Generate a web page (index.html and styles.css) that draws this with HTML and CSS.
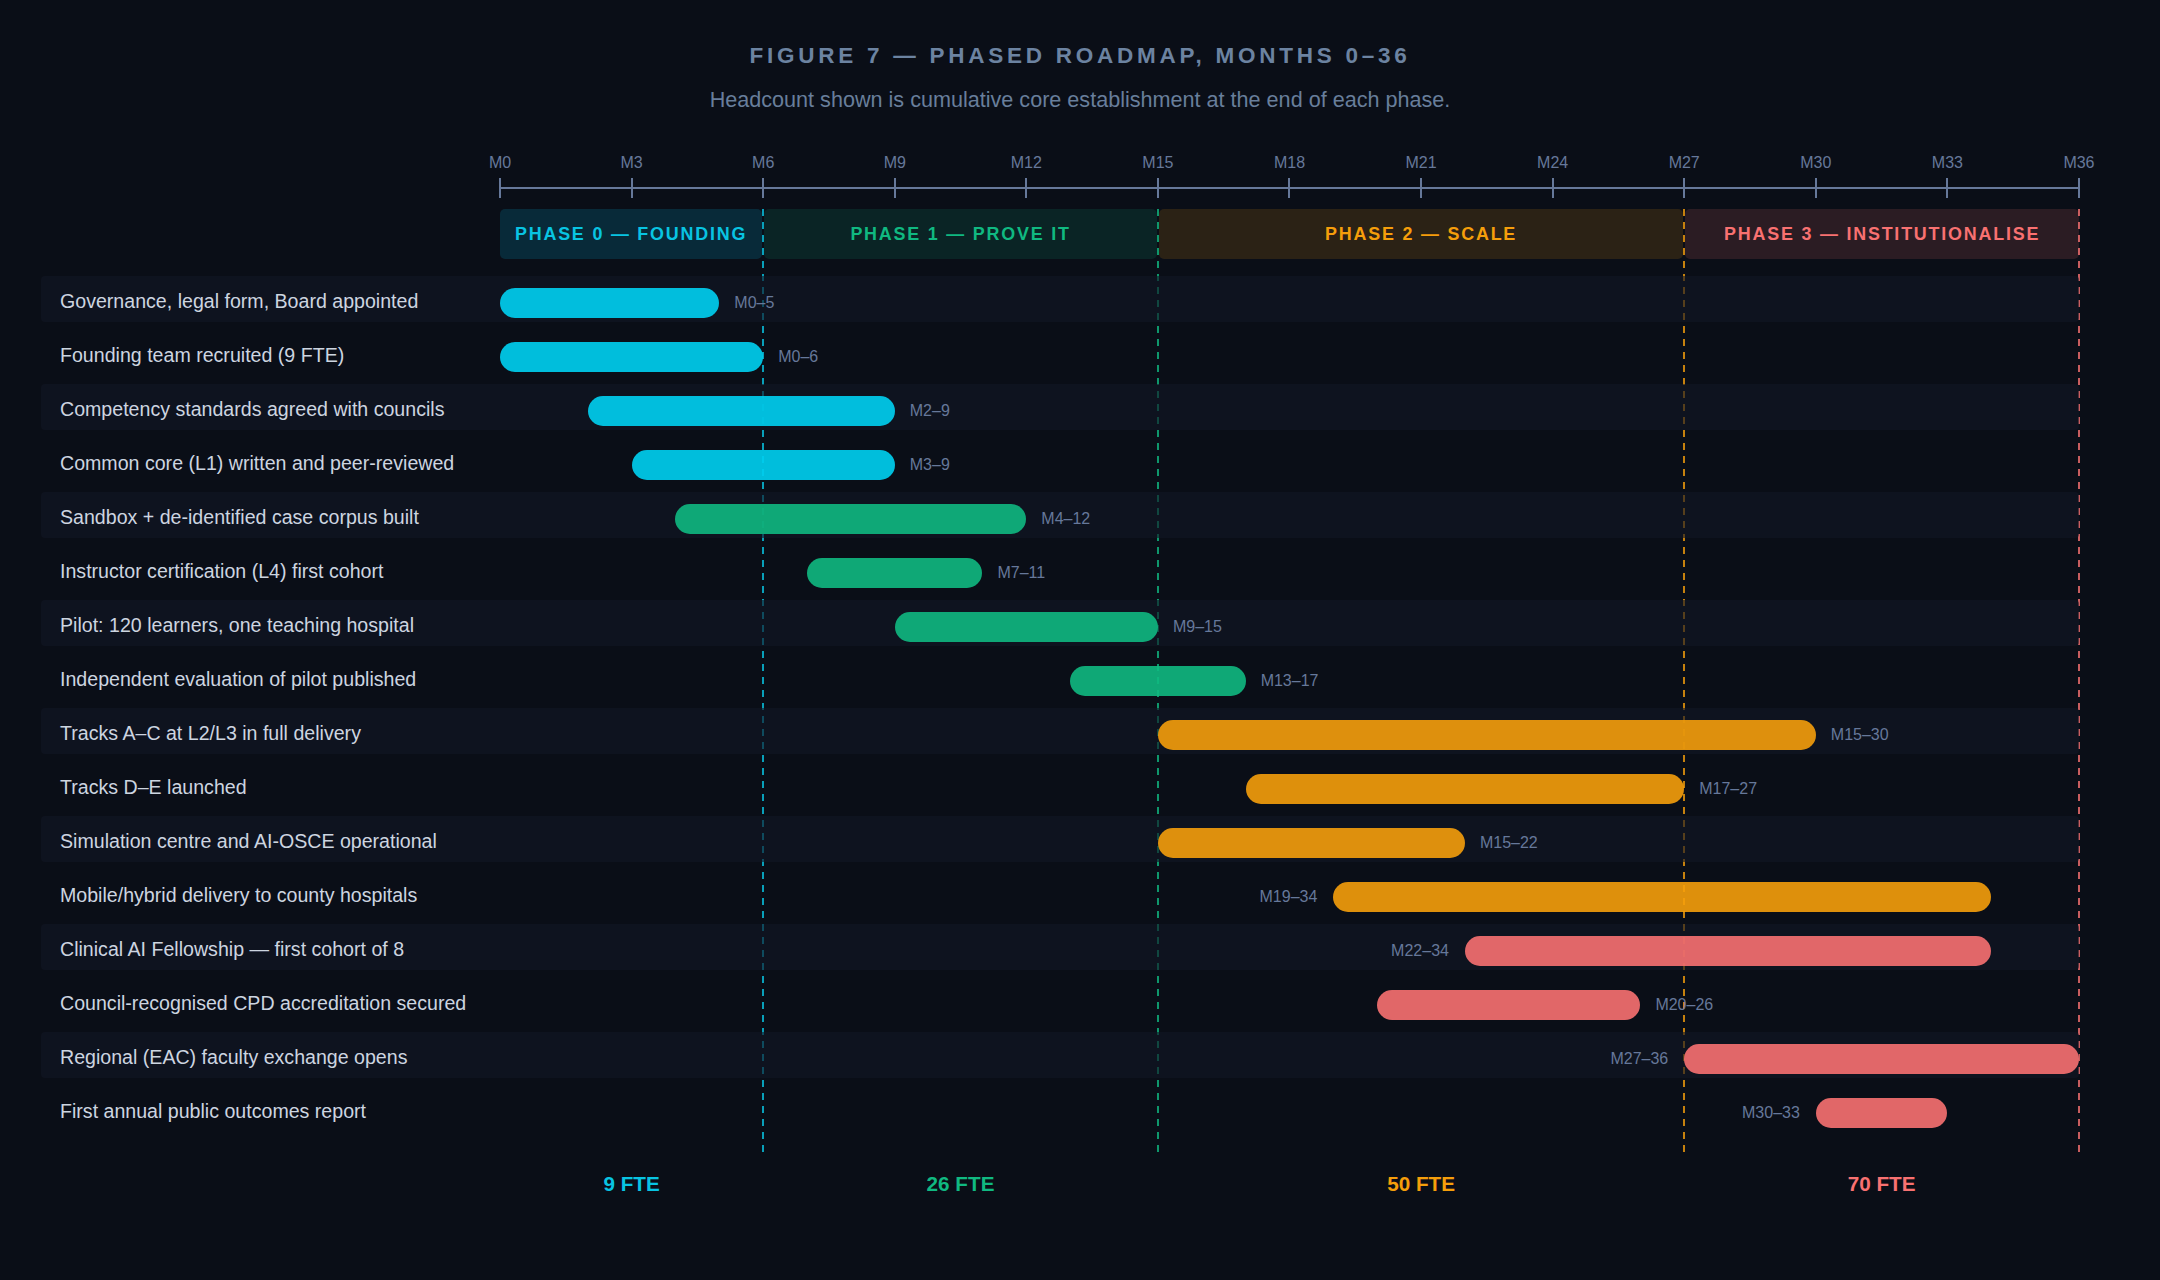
FILE: index.html
```html
<!DOCTYPE html>
<html lang="en">
<head>
<meta charset="utf-8">
<title>Figure 7 — Phased roadmap</title>
<link rel="stylesheet" href="styles.css">
</head>
<body>
<header class="head">
  <h1 class="title">FIGURE 7 — PHASED ROADMAP, MONTHS 0–36</h1>
  <p class="subtitle">Headcount shown is cumulative core establishment at the end of each phase.</p>
</header>

<section class="chart">
  <div class="track">
    <div></div>
    <div class="axis-labels">
      <span class="tick-label">M0</span><span class="tick-label">M3</span><span class="tick-label">M6</span><span class="tick-label">M9</span><span class="tick-label">M12</span><span class="tick-label">M15</span><span class="tick-label">M18</span><span class="tick-label">M21</span><span class="tick-label">M24</span><span class="tick-label">M27</span><span class="tick-label">M30</span><span class="tick-label">M33</span><span class="tick-label">M36</span>
    </div>
  </div>
  <div class="track">
    <div></div>
    <div class="axis-scale">
      <i class="tick"></i><i class="tick"></i><i class="tick"></i><i class="tick"></i><i class="tick"></i><i class="tick"></i><i class="tick"></i><i class="tick"></i><i class="tick"></i><i class="tick"></i><i class="tick"></i><i class="tick"></i><i class="tick"></i>
    </div>
  </div>

  <div class="plot">
    <div class="track">
      <div></div>
      <div class="phases">
        <div class="phase ph0">PHASE 0 — FOUNDING</div>
        <div class="phase ph1">PHASE 1 — PROVE IT</div>
        <div class="phase ph2">PHASE 2 — SCALE</div>
        <div class="phase ph3">PHASE 3 — INSTITUTIONALISE</div>
      </div>
    </div>

    <div class="guides">
      <i class="guide g6"></i>
      <i class="guide g15"></i>
      <i class="guide g27"></i>
      <i class="guide g36"></i>
    </div>

    <div class="rows">
      <div class="row"><div class="label">Governance, legal form, Board appointed</div><div class="lane"><div class="bar c0" style="grid-column: 1 / 6"><span class="bar-tag after">M0–5</span></div></div></div>
      <div class="row"><div class="label">Founding team recruited (9 FTE)</div><div class="lane"><div class="bar c0" style="grid-column: 1 / 7"><span class="bar-tag after">M0–6</span></div></div></div>
      <div class="row"><div class="label">Competency standards agreed with councils</div><div class="lane"><div class="bar c0" style="grid-column: 3 / 10"><span class="bar-tag after">M2–9</span></div></div></div>
      <div class="row"><div class="label">Common core (L1) written and peer-reviewed</div><div class="lane"><div class="bar c0" style="grid-column: 4 / 10"><span class="bar-tag after">M3–9</span></div></div></div>
      <div class="row"><div class="label">Sandbox + de-identified case corpus built</div><div class="lane"><div class="bar c1" style="grid-column: 5 / 13"><span class="bar-tag after">M4–12</span></div></div></div>
      <div class="row"><div class="label">Instructor certification (L4) first cohort</div><div class="lane"><div class="bar c1" style="grid-column: 8 / 12"><span class="bar-tag after">M7–11</span></div></div></div>
      <div class="row"><div class="label">Pilot: 120 learners, one teaching hospital</div><div class="lane"><div class="bar c1" style="grid-column: 10 / 16"><span class="bar-tag after">M9–15</span></div></div></div>
      <div class="row"><div class="label">Independent evaluation of pilot published</div><div class="lane"><div class="bar c1" style="grid-column: 14 / 18"><span class="bar-tag after">M13–17</span></div></div></div>
      <div class="row"><div class="label">Tracks A–C at L2/L3 in full delivery</div><div class="lane"><div class="bar c2" style="grid-column: 16 / 31"><span class="bar-tag after">M15–30</span></div></div></div>
      <div class="row"><div class="label">Tracks D–E launched</div><div class="lane"><div class="bar c2" style="grid-column: 18 / 28"><span class="bar-tag after">M17–27</span></div></div></div>
      <div class="row"><div class="label">Simulation centre and AI-OSCE operational</div><div class="lane"><div class="bar c2" style="grid-column: 16 / 23"><span class="bar-tag after">M15–22</span></div></div></div>
      <div class="row"><div class="label">Mobile/hybrid delivery to county hospitals</div><div class="lane"><div class="bar c2" style="grid-column: 20 / 35"><span class="bar-tag before">M19–34</span></div></div></div>
      <div class="row"><div class="label">Clinical AI Fellowship — first cohort of 8</div><div class="lane"><div class="bar c3" style="grid-column: 23 / 35"><span class="bar-tag before">M22–34</span></div></div></div>
      <div class="row"><div class="label">Council-recognised CPD accreditation secured</div><div class="lane"><div class="bar c3" style="grid-column: 21 / 27"><span class="bar-tag after">M20–26</span></div></div></div>
      <div class="row"><div class="label">Regional (EAC) faculty exchange opens</div><div class="lane"><div class="bar c3" style="grid-column: 28 / 37"><span class="bar-tag before">M27–36</span></div></div></div>
      <div class="row"><div class="label">First annual public outcomes report</div><div class="lane"><div class="bar c3" style="grid-column: 31 / 34"><span class="bar-tag before">M30–33</span></div></div></div>
    </div>
  </div>

  <div class="track fte">
    <div></div>
    <div class="fte-lane">
      <div class="fte-item f0">9 FTE</div>
      <div class="fte-item f1">26 FTE</div>
      <div class="fte-item f2">50 FTE</div>
      <div class="fte-item f3">70 FTE</div>
    </div>
  </div>
</section>
</body>
</html>
```

FILE: styles.css
```css
* { box-sizing: border-box; }

html, body {
  margin: 0;
  background: #0a0e17;
}

body {
  font-family: "Liberation Sans", Arial, sans-serif;
  width: 2160px;
  height: 1280px;
  overflow: hidden;
}

/* ---------- heading ---------- */
.head {
  padding-top: 41px;
  text-align: center;
}

.title {
  margin: 0;
  font-size: 22.5px;
  line-height: 30px;
  font-weight: 700;
  letter-spacing: 3.75px;
  color: #6c83a1;
}

.subtitle {
  margin: 15px 0 0;
  font-size: 21.6px;
  line-height: 28px;
  color: #687e9b;
}

/* ---------- chart frame ---------- */
.chart {
  margin: 39px 0 0 41px;
  width: 2038px;
}

.track {
  display: grid;
  grid-template-columns: 459px 1579px;
}

/* axis */
.axis-labels {
  display: flex;
  justify-content: space-between;
  height: 20px;
}

.tick-label {
  width: 0;
  display: flex;
  justify-content: center;
  white-space: nowrap;
  font-size: 16px;
  line-height: 20px;
  color: #66789a;
}

.axis-scale {
  position: relative;
  margin-top: 6px;
  height: 18px;
  display: flex;
  justify-content: space-between;
}

.axis-scale::before {
  content: "";
  position: absolute;
  left: 0;
  right: 0;
  top: 8px;
  height: 2px;
  background: #66789a;
}

.tick {
  width: 0;
  height: 18px;
  box-shadow: 0 0 0 1px #66789a;
}

/* plot area */
.plot {
  position: relative;
  margin-top: 12px;
}

.phases {
  display: grid;
  grid-template-columns: repeat(36, 1fr);
  height: 50px;
}

.phase {
  margin: 0 1px;
  border-radius: 5px;
  display: flex;
  align-items: center;
  justify-content: center;
  padding-top: 1px;
  font-weight: 700;
  font-size: 17.9px;
  letter-spacing: 1.8px;
  white-space: nowrap;
}

.ph0 { grid-column: 1 / 7;   background: rgba(0, 190, 235, 0.16); color: #08c4e2; margin-left: 0; }
.ph1 { grid-column: 7 / 16;  background: rgba(16, 185, 129, 0.13); color: #10b981; }
.ph2 { grid-column: 16 / 28; background: rgba(245, 158, 11, 0.14); color: #f59e0b; }
.ph3 { grid-column: 28 / 37; background: rgba(248, 113, 113, 0.14); color: #f87171; margin-right: 0; }

/* phase boundary guides */
.guides {
  position: absolute;
  top: 0;
  bottom: -12px;
  left: 459px;
  right: 0;
  z-index: 1;
  display: grid;
  grid-template-columns: repeat(36, 1fr);
  pointer-events: none;
}

.guide {
  grid-row: 1;
  width: 2px;
  margin-left: -1px;
  background: repeating-linear-gradient(to bottom, var(--c) 0 7px, transparent 7px 13px);
}

.g6  { grid-column: 7;  --c: rgba(8, 196, 226, 0.8); }
.g15 { grid-column: 16; --c: rgba(16, 185, 129, 0.8); }
.g27 { grid-column: 28; --c: rgba(245, 158, 11, 0.8); }
.g36 { grid-column: 36; --c: rgba(248, 113, 113, 0.8); justify-self: end; margin-left: 0; margin-right: -1px; }

/* rows */
.rows {
  position: relative;
  z-index: 2;
  display: flow-root;
  margin-top: 17px;
}

.row {
  display: grid;
  grid-template-columns: 459px 1579px;
  height: 46px;
  margin-bottom: 8px;
  border-radius: 4px;
}

.row:nth-child(odd) {
  background: rgba(17, 23, 37, 0.62);
}

.label {
  display: flex;
  align-items: center;
  padding: 4px 0 0 19px;
  font-size: 19.6px;
  color: #cdd5e0;
  white-space: nowrap;
}

.lane {
  display: grid;
  grid-template-columns: repeat(36, 1fr);
  align-items: start;
}

.bar {
  position: relative;
  height: 30px;
  margin-top: 12px;
  border-radius: 15px;
}

.c0 { background: rgba(0, 205, 238, 0.92); }
.c1 { background: rgba(16, 185, 129, 0.9); }
.c2 { background: rgba(245, 158, 11, 0.9); }
.c3 { background: rgba(248, 113, 113, 0.9); }

.bar-tag {
  position: absolute;
  top: 0;
  line-height: 30px;
  font-size: 16px;
  color: #66789a;
  white-space: nowrap;
}

.bar-tag.after  { left: calc(100% + 15px); }
.bar-tag.before { right: calc(100% + 16px); }

/* headcount row */
.fte {
  margin-top: 30px;
}

.fte-lane {
  display: grid;
  grid-template-columns: repeat(36, 1fr);
}

.fte-item {
  text-align: center;
  font-weight: 700;
  font-size: 20.7px;
  line-height: 28px;
}

.f0 { grid-column: 1 / 7;   color: #08c4e2; }
.f1 { grid-column: 7 / 16;  color: #10b981; }
.f2 { grid-column: 16 / 28; color: #f59e0b; }
.f3 { grid-column: 28 / 37; color: #f87171; }
```
